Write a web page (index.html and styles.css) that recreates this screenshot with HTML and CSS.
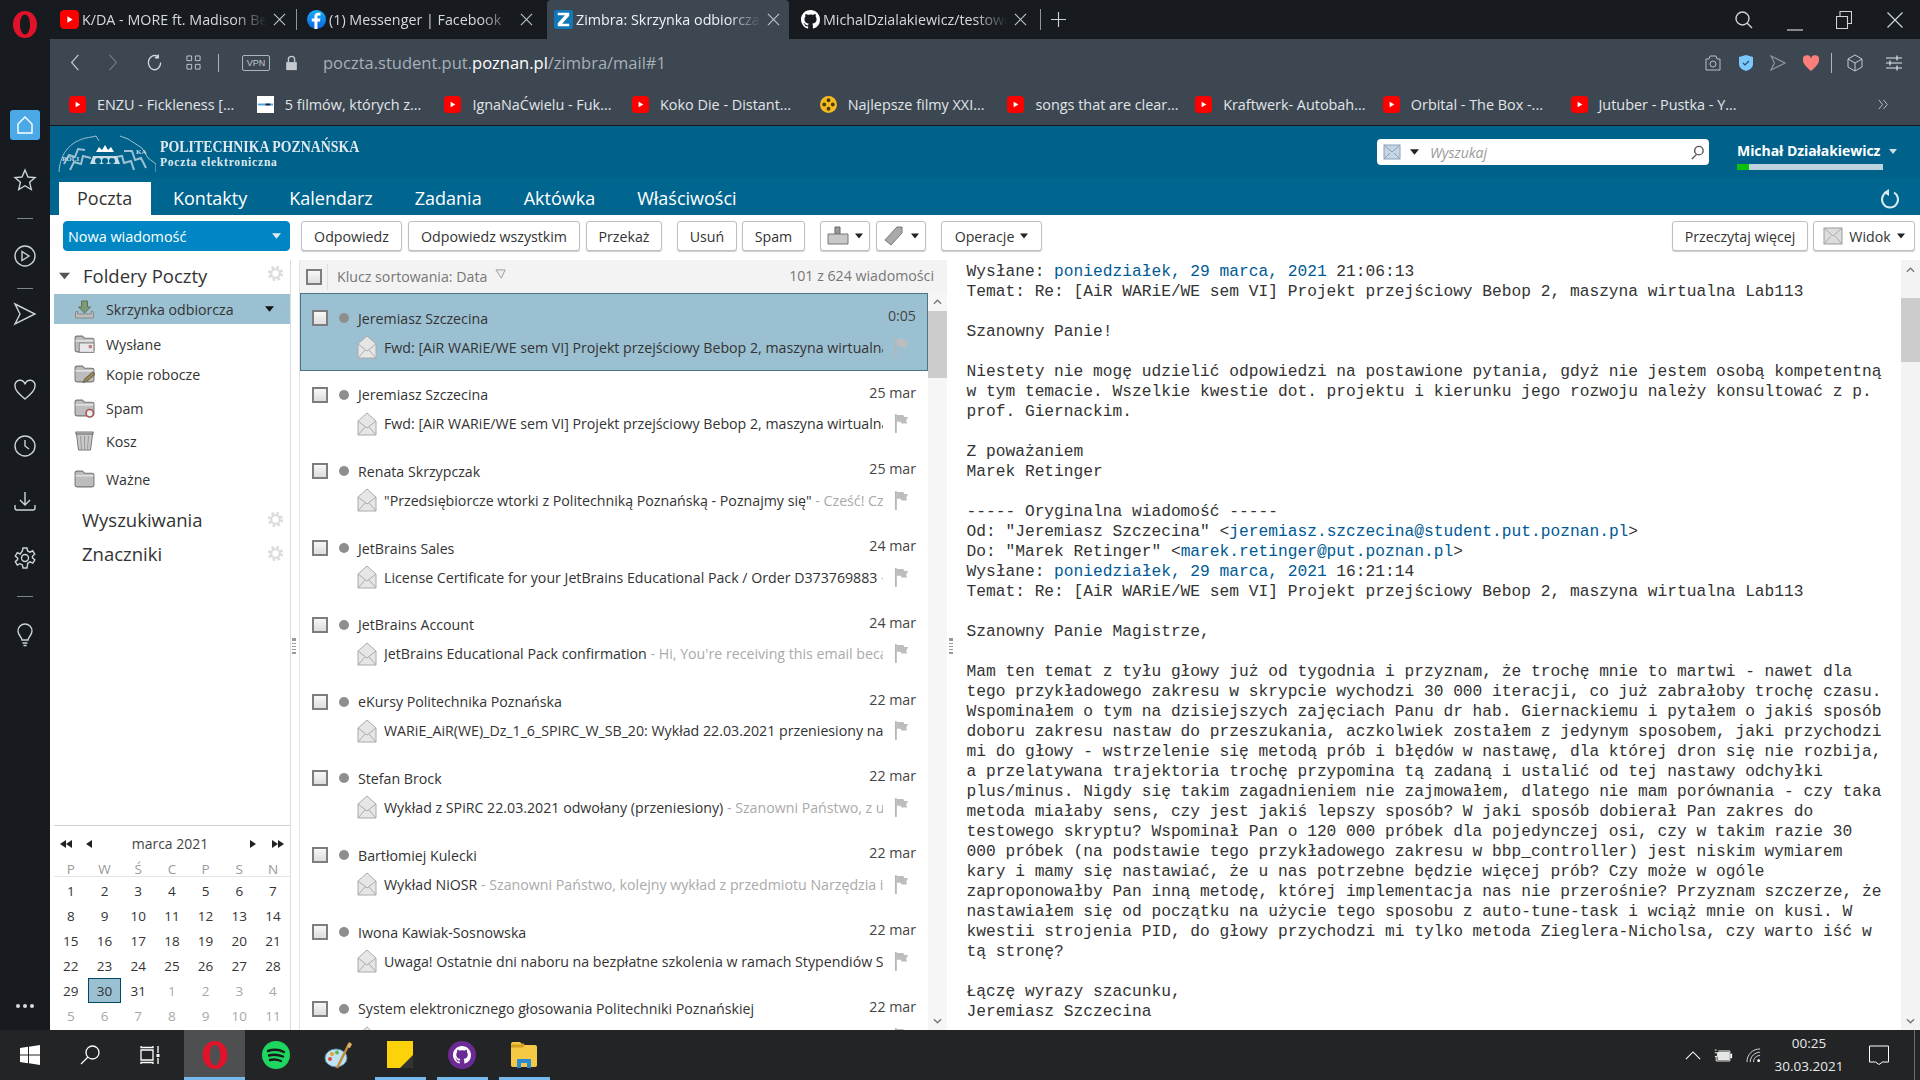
FILE: index.html
```html
<!DOCTYPE html>
<html lang="pl">
<head>
<meta charset="utf-8">
<title>Zimbra: Skrzynka odbiorcza</title>
<link rel="stylesheet" href="styles.css">
</head>
<body>
<svg class="defs" width="0" height="0">
  <symbol id="yt" viewBox="0 0 18 18"><rect x="0" y="0" width="18" height="18" rx="4" fill="#f00"/><path d="M7 6l5 3-5 3z" fill="#fff"/></symbol>
  <symbol id="opera" viewBox="0 0 24 27"><path fill="#e0132a" fill-rule="evenodd" d="M12 0C5 0 0 6 0 13.500S5 27 12 27s12-6 12-13.500S19 0 12 0zm0 3.500c-3 0-5 4.500-5 10s2 10 5 10 5-4.500 5-10-2-10-5-10z"/></symbol>
  <symbol id="gh" viewBox="0 0 16 16"><path fill="currentColor" d="M8 0C3.580 0 0 3.580 0 8c0 3.540 2.290 6.530 5.470 7.590.4.070.55-.17.55-.38 0-.19-.01-.82-.01-1.490-2.010.37-2.530-.49-2.690-.94-.09-.23-.48-.94-.82-1.130-.28-.15-.68-.52-.01-.53.63-.01 1.080.58 1.230.82.72 1.210 1.870.87 2.330.66.07-.52.28-.87.51-1.070-1.780-.2-3.640-.89-3.640-3.950 0-.87.31-1.590.82-2.150-.08-.2-.36-1.020.08-2.120 0 0 .67-.21 2.200.82.64-.18 1.320-.27 2-.27.68 0 1.360.09 2 .27 1.530-1.040 2.200-.82 2.200-.82.44 1.100.16 1.920.08 2.120.51.56.82 1.270.82 2.150 0 3.070-1.870 3.750-3.650 3.950.29.25.54.73.54 1.480 0 1.070-.01 1.930-.01 2.200 0 .21.15.46.55.38A8.013 8.013 0 0016 8c0-4.420-3.580-8-8-8z"/></symbol>
  <symbol id="x" viewBox="0 0 14 14"><path d="M1 1l12 12M13 1L1 13" stroke="currentColor" stroke-width="1.200" fill="none"/></symbol>
  <symbol id="env" viewBox="0 0 20 24"><path d="M1 9L10 1l9 8v14H1z" fill="#e6e6e6" stroke="#aaa"/><path d="M1 9l9 7 9-7M1 23l7-8M19 23l-7-8" fill="none" stroke="#aaa"/></symbol>
  <symbol id="flag" viewBox="0 0 16 20"><path d="M2 0v20" stroke="#b5b5b5" stroke-width="2"/><path d="M3 1h7l1 2h4l-2 4 1 3H8L7 8H3z" fill="#bdbdbd"/></symbol>
  <symbol id="gear" viewBox="0 0 20 20"><circle cx="10" cy="10" r="7" fill="none" stroke="#dcdcdc" stroke-width="4" stroke-dasharray="3 2.500"/><circle cx="10" cy="10" r="5" fill="none" stroke="#dcdcdc" stroke-width="2.500"/></symbol>
  <symbol id="folder" viewBox="0 0 20 18"><path d="M1 3.500C1 2 2 1.500 3 1.500h5l2 2h7c1 0 2 .5 2 1.500v10c0 1-1 1.500-2 1.500H3c-1 0-2-.5-2-1.500z" fill="#bdbdbd" stroke="#777"/><path d="M1.500 6h17" stroke="#eee"/></symbol>
  <symbol id="trash" viewBox="0 0 20 20"><path d="M1 1h18l-1 2-2 16H4L2 3z" fill="#c9c9c9" stroke="#777"/><path d="M1 3h18" stroke="#666"/><path d="M6 5l1 13M10 5v13M14 5l-1 13" stroke="#999"/></symbol>
  <symbol id="inbox" viewBox="0 0 20 20"><path d="M7 1h6v6h3l-6 6-6-6h3z" fill="#7d9a76" stroke="#5c7157"/><path d="M1 12l2-1v3h14v-3l2 1v6H1z" fill="#bdbdbd" stroke="#888"/></symbol>
  <symbol id="mailsm" viewBox="0 0 18 18"><rect x="1" y="2" width="16" height="14" fill="#c6d5e6" stroke="#8aa0b8"/><path d="M1 2l8 7 8-7M1 16l6-6M17 16l-6-6" fill="none" stroke="#8aa0b8"/></symbol>
  <symbol id="mg" viewBox="0 0 16 16"><circle cx="9.500" cy="6" r="4.500" fill="none" stroke="currentColor" stroke-width="1.500"/><path d="M7 10l-5 5" stroke="currentColor" stroke-width="1.500"/></symbol>
  <symbol id="tri" viewBox="0 0 10 6"><path d="M0 0h10L5 6z" fill="currentColor"/></symbol>
  <symbol id="chev" viewBox="0 0 10 6"><path d="M1 5l4-4 4 4" fill="none" stroke="currentColor" stroke-width="1.500"/></symbol>
  <symbol id="chevd" viewBox="0 0 10 6"><path d="M1 1l4 4 4-4" fill="none" stroke="currentColor" stroke-width="1.500"/></symbol>
</svg>

<div class="screen">
  <div class="main">
    <aside class="strip">
      <svg class="s-logo"><use href="#opera"/></svg>
      <div class="s-home"><svg viewBox="0 0 20 20"><path d="M3 9l7-7 7 7v9H3z" fill="none" stroke="#fff" stroke-width="1.400"/></svg></div>
      <svg class="s-ic s-star" viewBox="0 0 24 24"><path d="M12 2l3 7 7 .6-5.400 4.600 1.700 7.300L12 17.700 5.700 21.500l1.700-7.300L2 9.600 9 9z" fill="none" stroke="#cdd2d6" stroke-width="1.400"/></svg>
      <div class="s-line s-l1"></div>
      <svg class="s-ic s-play" viewBox="0 0 24 24"><circle cx="12" cy="12" r="10" fill="none" stroke="#cdd2d6" stroke-width="1.400"/><path d="M9 7.500l7 4.500-7 4.500z" fill="none" stroke="#cdd2d6" stroke-width="1.400"/></svg>
      <div class="s-line s-l2"></div>
      <svg class="s-ic s-send" viewBox="0 0 24 24"><path d="M2 2l20 10L2 22l5-10z" fill="none" stroke="#cdd2d6" stroke-width="1.400"/></svg>
      <svg class="s-ic s-heart" viewBox="0 0 24 24"><path d="M12 21C5 15 2 12 2 8a5 5 0 0 1 10-1.500A5 5 0 0 1 22 8c0 4-3 7-10 13z" fill="none" stroke="#cdd2d6" stroke-width="1.400"/></svg>
      <svg class="s-ic s-clock" viewBox="0 0 24 24"><circle cx="12" cy="12" r="10" fill="none" stroke="#cdd2d6" stroke-width="1.400"/><path d="M12 6v6l4 3" fill="none" stroke="#cdd2d6" stroke-width="1.400"/></svg>
      <svg class="s-ic s-down" viewBox="0 0 24 24"><path d="M12 3v13M7 11l5 5 5-5M2 16v3c0 1 1 2 2 2h16c1 0 2-1 2-2v-3" fill="none" stroke="#cdd2d6" stroke-width="1.400"/></svg>
      <svg class="s-ic s-cog" viewBox="0 0 24 24"><circle cx="12" cy="12" r="3.500" fill="none" stroke="#cdd2d6" stroke-width="1.400"/><path d="M10 2h4l.6 3 2.400 1.200 2.700-1.400 2 3.400-2.300 2 .1 1.600 2.300 2-2 3.400-2.800-1.300-2.300 1.400L14 22h-4l-.6-3-2.400-1.300-2.700 1.300-2-3.400 2.300-2v-1.600L2.300 10l2-3.400 2.800 1.400L9.400 5z" fill="none" stroke="#cdd2d6" stroke-width="1.400"/></svg>
      <div class="s-line s-l3"></div>
      <svg class="s-ic s-bulb" viewBox="0 0 24 24"><path d="M9 17c0-3-4-4.500-4-9a7 7 0 0 1 14 0c0 4.500-4 6-4 9zM9.500 20h5M10.500 22.500h3" fill="none" stroke="#cdd2d6" stroke-width="1.400"/></svg>
      <div class="s-dots"><i></i><i></i><i></i></div>
    </aside>

    <div class="browser">
      <div class="tabs">
        <div class="tab"><svg class="t-ic"><use href="#yt"/></svg><span class="t-txt">K/DA - MORE ft. Madison Beer</span><svg class="t-x"><use href="#x"/></svg></div>
        <div class="tab t-sep"><svg class="t-ic" viewBox="0 0 20 20"><defs><linearGradient id="fb" x1="0" y1="0" x2="0" y2="1"><stop offset="0" stop-color="#19aff8"/><stop offset="1" stop-color="#0d62e0"/></linearGradient></defs><circle cx="10" cy="10" r="10" fill="url(#fb)"/><path d="M11 20v-8h2.700l.4-3H11V7.200c0-.9.300-1.500 1.500-1.500h1.700V3c-.4 0-1.300-.1-2.400-.1-2.400 0-4 1.400-4 4.100V9H5v3h2.800v8z" fill="#fff"/></svg><span class="t-txt">(1) Messenger | Facebook</span><svg class="t-x"><use href="#x"/></svg></div>
        <div class="tab t-active"><svg class="t-ic" viewBox="0 0 20 20"><rect width="20" height="20" rx="2" fill="#1078b8"/><path d="M4 3h12v3l-7.500 8.500H16V17H4v-3l7.500-8.500H4z" fill="#fff"/></svg><span class="t-txt">Zimbra: Skrzynka odbiorcza: (10)</span><svg class="t-x"><use href="#x"/></svg></div>
        <div class="tab"><svg class="t-ic t-gh"><use href="#gh"/></svg><span class="t-txt">MichalDzialakiewicz/testowe</span><svg class="t-x"><use href="#x"/></svg></div>
        <div class="t-div"></div>
        <svg class="t-plus" viewBox="0 0 16 16"><path d="M8 0v16M0 8h16" stroke="#cfd3d6" stroke-width="1.200"/></svg>
        <div class="win">
          <svg class="w-search" viewBox="0 0 18 18"><circle cx="7.500" cy="7.500" r="6.500" fill="none" stroke="#cfd3d6" stroke-width="1.400"/><path d="M12 12l5 5" stroke="#cfd3d6" stroke-width="1.400"/></svg>
          <svg class="w-min" viewBox="0 0 16 16"><path d="M0 15h16" stroke="#cfd3d6" stroke-width="1.200"/></svg>
          <svg class="w-rest" viewBox="0 0 16 18"><path d="M.5 5.500h11v12H.5zM4 5.500V.5h11.500v12h-4" fill="none" stroke="#cfd3d6" stroke-width="1.100"/></svg>
          <svg class="w-close" viewBox="0 0 16 16"><path d="M.5.5l15 15M15.500.5l-15 15" stroke="#cfd3d6" stroke-width="1.200"/></svg>
        </div>
      </div>

      <div class="addr">
        <svg class="a-back" viewBox="0 0 12 20"><path d="M10 1L2 10l8 9" fill="none" stroke="#c5cad0" stroke-width="1.400"/></svg>
        <svg class="a-fwd" viewBox="0 0 12 20"><path d="M2 1l8 9-8 9" fill="none" stroke="#6f7a85" stroke-width="1.400"/></svg>
        <svg class="a-rel" viewBox="0 0 18 18"><path d="M15.500 9A6.500 7.500 0 1 1 12.500 2.800M13 .5v3.500H9.500" fill="none" stroke="#d5d9dc" stroke-width="1.400"/></svg>
        <svg class="a-grid" viewBox="0 0 16 16"><path d="M1 1h5v5H1zM10 1h5v5h-5zM1 10h5v5H1zM10 10h5v5h-5z" fill="none" stroke="#c5cad0"/></svg>
        <div class="a-sep"></div>
        <div class="a-vpn">VPN</div>
        <svg class="a-lock" viewBox="0 0 14 18"><path d="M3.500 8V5a3.500 3.500 0 0 1 7 0v3" fill="none" stroke="#c5cad0" stroke-width="1.500"/><rect x="1" y="8" width="12" height="9" fill="#c5cad0"/></svg>
        <div class="a-url">poczta.student.put.<b>poznan.pl</b>/zimbra/mail#1</div>
        <div class="a-right">
          <svg viewBox="0 0 18 18"><path d="M2 5h3l1-3h6l1 3h3v11H2z" fill="none" stroke="#b8bec4"/><circle cx="9" cy="10" r="3" fill="none" stroke="#b8bec4"/></svg>
          <svg viewBox="0 0 18 18"><path d="M9 1l7 2v7c0 4-4 6-7 7-3-1-7-3-7-7V3z" fill="#7cc7fb"/><path d="M6 9l2 2 4-4" fill="none" stroke="#26506e" stroke-width="1.200"/></svg>
          <svg viewBox="0 0 18 18"><path d="M2 2l14 7-14 7 3.500-7z" fill="none" stroke="#8d959c" stroke-width="1.200"/></svg>
          <svg viewBox="0 0 18 18"><path d="M9 17C3 12 1 9 1 6a4 4 0 0 1 8-1.500A4 4 0 0 1 17 6c0 3-2 6-8 11z" fill="#fa7f78"/></svg>
          <i class="a-rsep"></i>
          <svg viewBox="0 0 18 18"><path d="M9 1l7 4v8l-7 4-7-4V5zM2 5l7 4 7-4M9 9v8" fill="none" stroke="#c5cad0"/></svg>
          <svg class="a-sl" viewBox="0 0 18 18"><path d="M1 4h16M1 9h16M1 14h16M12 1.500v5M5 6.500v5M12 11.500v5" fill="none" stroke="#e2e5e7" stroke-width="1.200"/></svg>
        </div>
      </div>

      <div class="marks">
        <div class="mk"><svg class="m-ic"><use href="#yt"/></svg><span>ENZU - Fickleness [...</span></div>
        <div class="mk"><svg class="m-ic" viewBox="0 0 18 18"><rect width="18" height="18" fill="#fff"/><rect x="1" y="8" width="16" height="2" fill="#4aa3d8"/><rect x="9" y="8" width="5" height="2" fill="#223"/></svg><span>5 filmów, których z...</span></div>
        <div class="mk"><svg class="m-ic"><use href="#yt"/></svg><span>IgnaNaĆwielu - Fuk...</span></div>
        <div class="mk"><svg class="m-ic"><use href="#yt"/></svg><span>Koko Die - Distant...</span></div>
        <div class="mk"><svg class="m-ic" viewBox="0 0 18 18"><circle cx="9" cy="9" r="9" fill="#f5b921"/><circle cx="9" cy="4.500" r="2" fill="#4a3c10"/><circle cx="9" cy="13.500" r="2" fill="#4a3c10"/><circle cx="4.500" cy="9" r="2" fill="#4a3c10"/><circle cx="13.500" cy="9" r="2" fill="#4a3c10"/></svg><span>Najlepsze filmy XXI...</span></div>
        <div class="mk"><svg class="m-ic"><use href="#yt"/></svg><span>songs that are clear...</span></div>
        <div class="mk"><svg class="m-ic"><use href="#yt"/></svg><span>Kraftwerk- Autobah...</span></div>
        <div class="mk"><svg class="m-ic"><use href="#yt"/></svg><span>Orbital - The Box -...</span></div>
        <div class="mk"><svg class="m-ic"><use href="#yt"/></svg><span>Jutuber - Pustka - Y...</span></div>
        <svg class="m-more" viewBox="0 0 12 12"><path d="M1 1l4 5-4 5M6 1l4 5-4 5" fill="none" stroke="#c5cad0"/></svg>
      </div>

      <div class="page">
        <header class="z-head">
          <svg class="z-logo" viewBox="0 0 100 40">
            <path d="M3 38C4 18 16 5 36 3l4-1 3 5M100 38V30L92 24l-6-10-14-9-8-3" fill="none" stroke="#9dc0d2" stroke-width="1"/>
            <path d="M14 36l4-8 7 2 2-8 8 2M78 36l-3-9-7 2-2-7-6 1M8 30l5-9 6 2 3-8 7 1M90 34l-5-10-6 2-3-9-8 0" fill="none" stroke="#9dc0d2" stroke-width="2"/>
            <path d="M34 30l3-8h24l3 8z" fill="#c9dde7"/>
            <path d="M40 18l3-5 3 3 3-5 3 5 3-3 3 5z" fill="#fff"/>
            <circle cx="42" cy="27" r="3" fill="#00618a"/><circle cx="49" cy="27" r="3" fill="#00618a"/><circle cx="56" cy="27" r="3" fill="#00618a"/>
            <text x="6" y="27" class="z-logotxt">POLI</text>
            <text x="80" y="20" class="z-logotxt">KA</text>
          </svg>
          <div class="z-brand"><div class="z-b1">POLITECHNIKA POZNAŃSKA</div><div class="z-b2">Poczta elektroniczna</div></div>
          <div class="z-search">
            <svg class="zs-mail"><use href="#mailsm"/></svg>
            <svg class="zs-tri"><use href="#tri"/></svg>
            <span>Wyszukaj</span>
            <svg class="zs-mg"><use href="#mg"/></svg>
          </div>
          <div class="z-user">
            <div class="zu-name">Michał Działakiewicz<svg class="zu-tri"><use href="#tri"/></svg></div>
            <div class="zu-bar"><i></i></div>
          </div>
        </header>
        <nav class="z-nav">
          <a class="on">Poczta</a><a>Kontakty</a><a>Kalendarz</a><a>Zadania</a><a>Aktówka</a><a>Właściwości</a>
          <svg class="z-ref" viewBox="0 0 20 22"><path d="M14 4.500A8 8 0 1 1 6 4.500" fill="none" stroke="#d8e8ef" stroke-width="2"/><path d="M9 1v7L3.500 4.500z" fill="#d8e8ef"/></svg>
        </nav>
        <div class="z-tools">
          <button class="btn b-new">Nowa wiadomość<svg><use href="#tri"/></svg></button>
          <button class="btn b-a">Odpowiedz</button>
          <button class="btn b-b">Odpowiedz wszystkim</button>
          <button class="btn b-c">Przekaż</button>
          <button class="btn b-d">Usuń</button>
          <button class="btn b-e">Spam</button>
          <button class="btn b-f"><svg class="bi" viewBox="0 0 22 20"><path d="M8 1h5v7h-5z" fill="#999" stroke="#666"/><path d="M1 8h20v10H1z" fill="#c8c8c8" stroke="#777"/></svg><svg class="bt"><use href="#tri"/></svg></button>
          <button class="btn b-g"><svg class="bi" viewBox="0 0 22 20"><path d="M14 1h5v6L8 19l-6-5z" fill="#aaa" stroke="#777"/></svg><svg class="bt"><use href="#tri"/></svg></button>
          <button class="btn b-h">Operacje<svg class="bt"><use href="#tri"/></svg></button>
          <button class="btn b-i">Przeczytaj więcej</button>
          <button class="btn b-j"><svg class="bi" viewBox="0 0 20 18"><rect x="1" y="1" width="18" height="16" fill="#dcdcdc" stroke="#999"/><path d="M1 1l9 8 9-8M1 17l7-8M19 17l-7-8" fill="none" stroke="#aaa"/></svg>Widok<svg class="bt"><use href="#tri"/></svg></button>
        </div>

        <div class="z-body">
          <section class="folders">
            <div class="f-head"><svg class="f-tri"><use href="#tri"/></svg><span>Foldery Poczty</span><svg class="f-gear"><use href="#gear"/></svg></div>
            <div class="f-row on"><svg class="f-ic"><use href="#inbox"/></svg><span>Skrzynka odbiorcza</span><svg class="f-rt"><use href="#tri"/></svg></div>
            <div class="f-row r1"><svg class="f-ic" viewBox="0 0 20 18"><use href="#folder"/><rect x="5" y="8" width="14" height="9" fill="#e8e8ec" stroke="#888"/><rect x="14" y="10" width="3" height="3" fill="#c77"/></svg><span>Wysłane</span></div>
            <div class="f-row r2"><svg class="f-ic" viewBox="0 0 20 18"><use href="#folder"/><path d="M9 17l1-3 8-7 2 2-8 7z" fill="#a68a4a" stroke="#665"/></svg><span>Kopie robocze</span></div>
            <div class="f-row r3"><svg class="f-ic" viewBox="0 0 20 18"><use href="#folder"/><circle cx="15" cy="14" r="3.500" fill="#eee" stroke="#a55" stroke-width="1.500"/></svg><span>Spam</span></div>
            <div class="f-row r4"><svg class="f-ic"><use href="#trash"/></svg><span>Kosz</span></div>
            <div class="f-row r5"><svg class="f-ic"><use href="#folder"/></svg><span>Ważne</span></div>
            <div class="f-sec s1"><span>Wyszukiwania</span><svg class="f-gear"><use href="#gear"/></svg></div>
            <div class="f-sec s2"><span>Znaczniki</span><svg class="f-gear"><use href="#gear"/></svg></div>
            <div class="cal">
              <div class="c-head">
                <svg class="c-n" viewBox="0 0 12 8"><path d="M6 0v8L0 4zM12 0v8L6 4z"/></svg>
                <svg class="c-n c-n2" viewBox="0 0 6 8"><path d="M6 0v8L0 4z"/></svg>
                <span>marca 2021</span>
                <svg class="c-n c-n3" viewBox="0 0 6 8"><path d="M0 0v8l6-4z"/></svg>
                <svg class="c-n c-n4" viewBox="0 0 12 8"><path d="M0 0v8l6-4zM6 0v8l6-4z"/></svg>
              </div>
              <div class="c-grid c-wk"><span>P</span><span>W</span><span>Ś</span><span>C</span><span>P</span><span>S</span><span>N</span></div>
              <div class="c-grid">
                <span>1</span><span>2</span><span>3</span><span>4</span><span>5</span><span>6</span><span>7</span>
                <span>8</span><span>9</span><span>10</span><span>11</span><span>12</span><span>13</span><span>14</span>
                <span>15</span><span>16</span><span>17</span><span>18</span><span>19</span><span>20</span><span>21</span>
                <span>22</span><span>23</span><span>24</span><span>25</span><span>26</span><span>27</span><span>28</span>
                <span>29</span><span class="today">30</span><span>31</span><span class="o">1</span><span class="o">2</span><span class="o">3</span><span class="o">4</span>
                <span class="o">5</span><span class="o">6</span><span class="o">7</span><span class="o">8</span><span class="o">9</span><span class="o">10</span><span class="o">11</span>
              </div>
            </div>
          </section>
          <div class="split"><i></i></div>

          <section class="list">
            <div class="l-head">
              <span class="cb"></span><i class="l-div"></i>
              <span class="l-sort">Klucz sortowania: Data</span>
              <svg class="l-st" viewBox="0 0 12 12"><path d="M1 1h10L7 10z" fill="#eee" stroke="#999"/></svg>
              <span class="l-count">101 z 624 wiadomości</span>
            </div>
            <div class="l-wrap">
              <div class="rows">
                <article class="row sel"><div class="r-top"><span class="cb"></span><i class="dot"></i><span class="r-name">Jeremiasz Szczecina</span><span class="r-date">0:05</span></div><div class="r-bot"><svg class="r-env"><use href="#env"/></svg><div class="r-sub">Fwd: [AiR WARiE/WE sem VI] Projekt przejściowy Bebop 2, maszyna wirtualna Lab113</div><svg class="r-flag"><use href="#flag"/></svg></div></article>
                <article class="row"><div class="r-top"><span class="cb"></span><i class="dot"></i><span class="r-name">Jeremiasz Szczecina</span><span class="r-date">25 mar</span></div><div class="r-bot"><svg class="r-env"><use href="#env"/></svg><div class="r-sub">Fwd: [AiR WARiE/WE sem VI] Projekt przejściowy Bebop 2, maszyna wirtualna Lab113</div><svg class="r-flag"><use href="#flag"/></svg></div></article>
                <article class="row"><div class="r-top"><span class="cb"></span><i class="dot"></i><span class="r-name">Renata Skrzypczak</span><span class="r-date">25 mar</span></div><div class="r-bot"><svg class="r-env"><use href="#env"/></svg><div class="r-sub">"Przedsiębiorcze wtorki z Politechniką Poznańską - Poznajmy się" <em>- Cześć! Czy chcesz</em></div><svg class="r-flag"><use href="#flag"/></svg></div></article>
                <article class="row"><div class="r-top"><span class="cb"></span><i class="dot"></i><span class="r-name">JetBrains Sales</span><span class="r-date">24 mar</span></div><div class="r-bot"><svg class="r-env"><use href="#env"/></svg><div class="r-sub">License Certificate for your JetBrains Educational Pack / Order D373769883 <em>- Hello</em></div><svg class="r-flag"><use href="#flag"/></svg></div></article>
                <article class="row"><div class="r-top"><span class="cb"></span><i class="dot"></i><span class="r-name">JetBrains Account</span><span class="r-date">24 mar</span></div><div class="r-bot"><svg class="r-env"><use href="#env"/></svg><div class="r-sub">JetBrains Educational Pack confirmation <em>- Hi, You're receiving this email because you</em></div><svg class="r-flag"><use href="#flag"/></svg></div></article>
                <article class="row"><div class="r-top"><span class="cb"></span><i class="dot"></i><span class="r-name">eKursy Politechnika Poznańska</span><span class="r-date">22 mar</span></div><div class="r-bot"><svg class="r-env"><use href="#env"/></svg><div class="r-sub">WARiE_AiR(WE)_Dz_1_6_SPIRC_W_SB_20: Wykład 22.03.2021 przeniesiony na inny termin</div><svg class="r-flag"><use href="#flag"/></svg></div></article>
                <article class="row"><div class="r-top"><span class="cb"></span><i class="dot"></i><span class="r-name">Stefan Brock</span><span class="r-date">22 mar</span></div><div class="r-bot"><svg class="r-env"><use href="#env"/></svg><div class="r-sub">Wykład z SPiRC 22.03.2021 odwołany (przeniesiony) <em>- Szanowni Państwo, z uwagi na</em></div><svg class="r-flag"><use href="#flag"/></svg></div></article>
                <article class="row"><div class="r-top"><span class="cb"></span><i class="dot"></i><span class="r-name">Bartłomiej Kulecki</span><span class="r-date">22 mar</span></div><div class="r-bot"><svg class="r-env"><use href="#env"/></svg><div class="r-sub">Wykład NiOSR <em>- Szanowni Państwo, kolejny wykład z przedmiotu Narzędzia informatyczne</em></div><svg class="r-flag"><use href="#flag"/></svg></div></article>
                <article class="row"><div class="r-top"><span class="cb"></span><i class="dot"></i><span class="r-name">Iwona Kawiak-Sosnowska</span><span class="r-date">22 mar</span></div><div class="r-bot"><svg class="r-env"><use href="#env"/></svg><div class="r-sub">Uwaga! Ostatnie dni naboru na bezpłatne szkolenia w ramach Stypendiów Sukcesu</div><svg class="r-flag"><use href="#flag"/></svg></div></article>
                <article class="row"><div class="r-top"><span class="cb"></span><i class="dot"></i><span class="r-name">System elektronicznego głosowania Politechniki Poznańskiej</span><span class="r-date">22 mar</span></div><div class="r-bot"><svg class="r-env"><use href="#env"/></svg><div class="r-sub">Zaproszenie do głosowania</div><svg class="r-flag"><use href="#flag"/></svg></div></article>
              </div>
              <div class="sb sb-l"><svg class="sb-up"><use href="#chev"/></svg><div class="sb-th"></div><svg class="sb-dn"><use href="#chevd"/></svg></div>
            </div>
          </section>
          <div class="split split2"><i></i></div>

          <section class="msg">
<pre class="m-text">Do: "Jeremiasz Szczecina" &lt;<a>jeremiasz.szczecina@student.put.poznan.pl</a>&gt;
Wysłane: <a>poniedziałek, 29 marca, 2021</a> 21:06:13
Temat: Re: [AiR WARiE/WE sem VI] Projekt przejściowy Bebop 2, maszyna wirtualna Lab113

Szanowny Panie!

Niestety nie mogę udzielić odpowiedzi na postawione pytania, gdyż nie jestem osobą kompetentną
w tym temacie. Wszelkie kwestie dot. projektu i kierunku jego rozwoju należy konsultować z p.
prof. Giernackim.

Z poważaniem
Marek Retinger

----- Oryginalna wiadomość -----
Od: "Jeremiasz Szczecina" &lt;<a>jeremiasz.szczecina@student.put.poznan.pl</a>&gt;
Do: "Marek Retinger" &lt;<a>marek.retinger@put.poznan.pl</a>&gt;
Wysłane: <a>poniedziałek, 29 marca, 2021</a> 16:21:14
Temat: Re: [AiR WARiE/WE sem VI] Projekt przejściowy Bebop 2, maszyna wirtualna Lab113

Szanowny Panie Magistrze,

Mam ten temat z tyłu głowy już od tygodnia i przyznam, że trochę mnie to martwi - nawet dla
tego przykładowego zakresu w skrypcie wychodzi 30 000 iteracji, co już zabrałoby trochę czasu.
Wspominałem o tym na dzisiejszych zajęciach Panu dr hab. Giernackiemu i pytałem o jakiś sposób
doboru zakresu nastaw do przeszukania, aczkolwiek zostałem z jedynym sposobem, jaki przychodzi
mi do głowy - wstrzelenie się metodą prób i błędów w nastawę, dla której dron się nie rozbija,
a przelatywana trajektoria trochę przypomina tą zadaną i ustalić od tej nastawy odchyłki
plus/minus. Nigdy się takim zagadnieniem nie zajmowałem, dlatego nie mam porównania - czy taka
metoda miałaby sens, czy jest jakiś lepszy sposób? W jaki sposób dobierał Pan zakres do
testowego skryptu? Wspominał Pan o 120 000 próbek dla pojedynczej osi, czy w takim razie 30
000 próbek (na podstawie tego przykładowego zakresu w bbp_controller) jest niskim wymiarem
kary i mamy się nastawiać, że u nas potrzebne będzie więcej prób? Czy może w ogóle
zaproponowałby Pan inną metodę, której implementacja nas nie przerośnie? Przyznam szczerze, że
nastawiałem się od początku na użycie tego sposobu z auto-tune-task i wciąż mnie on kusi. W
kwestii strojenia PID, do głowy przychodzi mi tylko metoda Zieglera-Nicholsa, czy warto iść w
tą stronę?

Łączę wyrazy szacunku,
Jeremiasz Szczecina</pre>
            <div class="sb sb-m"><svg class="sb-up"><use href="#chev"/></svg><div class="sb-th"></div><svg class="sb-dn"><use href="#chevd"/></svg></div>
          </section>
        </div>
      </div>
    </div>
  </div>

  <footer class="taskbar">
    <div class="tb"><svg class="i-win" viewBox="0 0 20 20"><path d="M0 3l8-1.200V9.500H0zM9 1.700L20 0v9.500H9zM0 10.500h8v7.700L0 17zM9 10.500h11V20L9 18.300z" fill="#fff"/></svg></div>
    <div class="tb"><svg class="i-sr" viewBox="0 0 20 20"><circle cx="12.500" cy="7.500" r="6.500" fill="none" stroke="#fff" stroke-width="1.300"/><path d="M8 12l-7 7" stroke="#fff" stroke-width="1.300"/></svg></div>
    <div class="tb tb-task"><svg class="i-tv" viewBox="0 0 20 20"><path d="M1 5h12v10H1zM1 1v1.500h12V1M1 19v-1.500h12V19M18 1v7M18 13v6" fill="none" stroke="#fff" stroke-width="1.300"/><rect x="16.500" y="9" width="3" height="3" fill="#fff"/></svg></div>
    <div class="tb tb-op"><svg class="i-app"><use href="#opera"/></svg></div>
    <div class="tb"><svg class="i-app" viewBox="0 0 28 28"><circle cx="14" cy="14" r="14" fill="#1ed760"/><path d="M6 10c6-2 11-1.500 16 1M7 14.500c5-1.500 9-1 14 1M8 19c4-1 7-.7 11 1" fill="none" stroke="#1a1a1a" stroke-width="2.400" stroke-linecap="round"/></svg></div>
    <div class="tb"><svg class="i-app" viewBox="0 0 28 28"><ellipse cx="12" cy="17" rx="11" ry="9" fill="#bfe3f3" stroke="#5a8ba8"/><circle cx="6" cy="18" r="2" fill="#d84b3d"/><circle cx="8" cy="13" r="2" fill="#e8a030"/><circle cx="13" cy="11.500" r="2" fill="#5ab552"/><path d="M13 27L25 3" stroke="#c58a3a" stroke-width="2.500"/><path d="M23 6l2-5 3 2-2 4z" fill="#e0b468"/></svg></div>
    <div class="tb run"><svg class="i-app" viewBox="0 0 28 28"><path d="M1 0h26v26c0 .5-.5 1-1 1H1z" fill="#fcd20a"/><path d="M27 14v12c0 .5-.5 1-1 1H14z" fill="#333"/></svg></div>
    <div class="tb run"><svg class="i-app i-ghbg" viewBox="0 0 28 28"><circle cx="14" cy="14" r="14" fill="#6c2a94"/><svg x="5" y="5" width="18" height="18" viewBox="0 0 16 16" color="#fff"><use href="#gh"/></svg></svg></div>
    <div class="tb run"><svg class="i-app" viewBox="0 0 28 28"><path d="M1 3c0-1 .5-2 2-2h7l3 3h12c1.500 0 2 1 2 2v18c0 1-.5 2-2 2H3c-1.500 0-2-1-2-2z" fill="#f6c945"/><path d="M1 5h11l2-2" fill="none" stroke="#d69e1e" stroke-width="3"/><path d="M7 27v-9h14v9h-4v-5h-6v5z" fill="#2a8ad4"/></svg></div>
    <div class="tray">
      <svg class="i-car" viewBox="0 0 18 10"><path d="M1 9l8-8 8 8" fill="none" stroke="#fff" stroke-width="1.200"/></svg>
      <svg class="i-bat" viewBox="0 0 22 14"><path d="M2 1h2M2 4h3v4H2M3.500 8v5h15V2H6" fill="none" stroke="#fff"/><rect x="5" y="3" width="13" height="9" fill="#e6e6e6"/><rect x="19" y="5" width="2" height="5" fill="#fff"/></svg>
      <svg class="i-wifi" viewBox="0 0 16 16"><path d="M1 15C1 7 7 1 15 1M4.500 15c0-6 5-10.500 10.500-10.500M8 15c0-4 3-7 7-7" fill="none" stroke="#ddd"/><circle cx="13.500" cy="13.500" r="1.500" fill="#fff"/></svg>
      <div class="clock"><div>00:25</div><div>30.03.2021</div></div>
      <svg class="i-note" viewBox="0 0 20 20"><path d="M.5 1h19v16h-6l-3.500 2.500L6.500 17h-6z" fill="none" stroke="#fff" stroke-width="1"/></svg>
      <i class="tb-show"></i>
    </div>
  </footer>
</div>
</body>
</html>
```
FILE: styles.css
```css
* { box-sizing: border-box; }
html, body { margin: 0; padding: 0; width: 1920px; height: 1080px; overflow: hidden; }
body { font-family: "Open Sans", "Liberation Sans", sans-serif; font-size: 14.2px; color: #333; background: #171b20; }
.defs { position: absolute; }
svg { display: block; flex: none; }

.screen { display: flex; flex-direction: column; height: 1080px; }
.main { display: flex; height: 1030px; }

/* left opera strip */
.strip { width: 50px; background: #171b20; display: flex; flex-direction: column; align-items: center; }
.s-logo { width: 24px; height: 27px; margin-top: 11px; }
.s-home { width: 30px; height: 30px; margin-top: 72px; border-radius: 3px; background: #4ba9e8; padding: 5px; }
.s-ic { width: 24px; height: 24px; }
.s-star { margin-top: 28px; }
.s-line { width: 16px; height: 1px; background: #7e858b; }
.s-l1 { margin-top: 26px; }
.s-play { margin-top: 25px; }
.s-l2 { margin-top: 20px; }
.s-send { margin-top: 13px; }
.s-heart { margin-top: 52px; }
.s-clock { margin-top: 32px; }
.s-down { margin-top: 31px; }
.s-cog { margin-top: 33px; }
.s-l3 { margin-top: 26px; }
.s-bulb { margin-top: 26px; }
.s-dots { margin-top: auto; margin-bottom: 22px; display: flex; gap: 3px; }
.s-dots i { width: 4px; height: 4px; border-radius: 50%; background: #d8dbde; }

.browser { width: 1870px; display: flex; flex-direction: column; }

/* tabs */
.tabs { height: 39px; display: flex; align-items: flex-start; gap: 5px; padding-left: 3px; position: relative; background: #171b20; }
.tab { width: 242px; height: 39px; display: flex; align-items: center; padding: 0 9px 0 7px; color: #d6d9db; font-size: 14.300px; position: relative; border-radius: 4px 4px 0 0; }
.t-sep::before { content: ""; position: absolute; left: -4px; top: 9px; height: 21px; width: 1px; background: #8f979d; }
.t-active { background: #3c4752; color: #f0f1f2; }
.t-ic { width: 19px; height: 19px; }
.t-gh { color: #fff; }
.t-txt { flex: 1; margin-left: 3px; white-space: nowrap; overflow: hidden; -webkit-mask-image: linear-gradient(90deg, #000 82%, transparent 100%); mask-image: linear-gradient(90deg, #000 82%, transparent 100%); }
.t-x { width: 13px; height: 13px; margin-left: 6px; color: #bfc4c8; }
.t-div { width: 1px; height: 21px; margin: 9px 0 0 -1px; background: #8f979d; }
.t-plus { width: 15px; height: 15px; margin: 12px 0 0 5px; }
.win { position: absolute; inset: 0 0 0 auto; display: flex; align-items: center; }
.w-search { width: 18px; height: 18px; margin-right: 34px; }
.w-min { width: 16px; height: 16px; margin-right: 33px; margin-top: 6px; }
.w-rest { width: 16px; height: 18px; margin-right: 35px; }
.w-close { width: 16px; height: 16px; margin-right: 17px; }

/* address bar */
.addr { height: 49px; background: #3c4752; display: flex; align-items: center; position: relative; padding-bottom: 2px; }
.a-back { width: 12px; height: 17px; margin-left: 19px; }
.a-fwd { width: 12px; height: 17px; margin-left: 26px; }
.a-rel { width: 17px; height: 17px; margin-left: 27px; }
.a-grid { width: 15px; height: 15px; margin-left: 23px; }
.a-sep { width: 1px; height: 18px; margin-left: 17px; background: #aeb4ba; }
.a-vpn { width: 28px; height: 16px; margin-left: 23px; border: 1px solid #aeb4ba; border-radius: 2px; font-size: 9px; line-height: 14px; text-align: center; color: #c5cad0; font-family: "Liberation Sans", sans-serif; }
.a-lock { width: 13px; height: 16px; margin-left: 15px; }
.a-url { margin-left: 25px; font-size: 16.500px; color: #a8b0b8; white-space: nowrap; }
.a-url b { font-weight: 400; color: #fff; }
.a-right { margin-left: auto; display: flex; align-items: center; gap: 14.500px; padding-right: 17px; }
.a-right svg { width: 18px; height: 18px; }
.a-right .a-sl { margin-left: 7px; }
.a-rsep { width: 1px; height: 20px; background: #aeb4ba; margin: 0 -1px 0 -3px; }

/* bookmarks */
.marks { height: 37px; background: #3c4752; display: flex; align-items: center; padding: 0 0 4px 19px; position: relative; }
.mk { width: 187.700px; display: flex; align-items: center; gap: 11px; color: #e2e5e8; font-size: 14.400px; white-space: nowrap; overflow: hidden; }
.m-ic { width: 17px; height: 17px; }
.m-more { width: 11px; height: 11px; position: absolute; right: 31px; top: 11px; }

/* zimbra page */
.page { flex: 1; background: #fff; display: flex; flex-direction: column; border-top: 1px solid #14181c; min-height: 0; }
.z-head { height: 52px; background: #00618a; display: flex; position: relative; color: #fff; }
.z-logo { width: 100px; height: 40px; margin: 8px 0 0 6px; }
.z-logotxt { font: 700 7px "Liberation Serif", serif; fill: #c4dbe6; }
.z-brand { margin: 11px 0 0 4px; font-family: "Liberation Serif", serif; font-weight: 700; color: #dfeaf0; white-space: nowrap; }
.z-b1 { font-size: 17px; line-height: 19px; transform: scaleX(.816); transform-origin: 0 0; }
.z-b2 { font-size: 11.500px; line-height: 12px; letter-spacing: .8px; }
.z-search { width: 332px; height: 26px; position: absolute; left: 1327px; top: 13px; background: #fff; border-radius: 4px; display: flex; align-items: center; color: #9a9a9a; font-size: 14px; font-style: italic; padding-left: 6px; }
.zs-mail { width: 18px; height: 18px; }
.zs-tri { width: 9px; height: 6px; margin: 0 11px 0 9px; color: #222; }
.zs-mg { width: 15px; height: 15px; margin-left: auto; margin-right: 4px; color: #555; }
.z-user { position: absolute; left: 1687px; top: 0; width: 170px; }
.zu-name { margin-top: 15px; font-size: 14px; line-height: 20px; font-weight: 700; letter-spacing: -.05px; white-space: nowrap; display: flex; align-items: center; color: #fff; }
.zu-tri { width: 8px; height: 5px; margin-left: 9px; color: #cfe0e8; }
.zu-bar { width: 146px; height: 6px; margin-top: 3px; background: #bcd3de; }
.zu-bar i { display: block; width: 12px; height: 6px; background: #0cc00c; }

.z-nav { height: 37px; background: #006690; display: flex; align-items: flex-end; padding-left: 9px; position: relative; }
.z-nav a { height: 33px; font-size: 18px; line-height: 32px; color: #fff; padding: 0 20px; margin-right: 2px; white-space: nowrap; }
.z-nav a.on { background: #fff; color: #333; width: 92px; padding: 0 0 0 18px; margin-right: 2px; }
.z-ref { position: absolute; right: 20px; top: 10px; width: 20px; height: 22px; }

.z-tools { height: 45px; display: flex; align-items: flex-start; padding: 6px 5px 0 13px; gap: 6px; background: #fff; }
.btn { height: 30px; padding: 0; font: inherit; font-size: 14.200px; color: #333; background: #fff; border: 1px solid #bfbfbf; border-radius: 3px; box-shadow: 0 1px 1px #ccc; display: flex; align-items: center; justify-content: center; white-space: nowrap; }
.b-new { width: 227px; background: #0087c3; color: #fff; border-color: #0087c3; box-shadow: none; justify-content: flex-start; padding-left: 4px; margin-right: 5px; border-radius: 4px; position: relative; font-size: 14.400px; }
.b-new svg { position: absolute; right: 8px; top: 11px; width: 9px; height: 6px; color: #dcecf4; }
.b-a { width: 101px; }
.b-b { width: 172px; }
.b-c { width: 76px; }
.b-d { width: 60px; margin-left: 9px; }
.b-e { width: 63px; margin-left: -1px; }
.b-f { width: 50px; margin-left: 9px; }
.b-g { width: 50px; }
.b-h { width: 101px; margin-left: 9px; }
.b-i { width: 136px; margin-left: auto; }
.b-j { width: 102px; margin-left: -1px; }
.bi { width: 22px; height: 20px; }
.bt { width: 8px; height: 6px; margin-left: 6px; color: #222; }
.b-j .bi { width: 20px; height: 18px; margin-right: 6px; }

.z-body { flex: 1; display: flex; min-height: 0; }

/* folders */
.folders { width: 241px; border-right: 1px solid #dcdcdc; padding-left: 4px; display: flex; flex-direction: column; }
.f-head { height: 34px; display: flex; align-items: center; font-size: 18.500px; position: relative; padding: 0 0 4px 29px; color: #333; }
.f-tri { position: absolute; left: 5px; top: 11px; width: 11px; height: 10px; color: #555; }
.f-gear { position: absolute; right: 6px; top: 5px; width: 17px; height: 17px; }
.f-head .f-gear { top: 5px; }
.f-row { display: flex; align-items: center; height: 30px; position: relative; padding-left: 20px; }
.f-row span { margin-left: 11px; }
.f-ic { width: 21px; height: 20px; }
.f-row.on { background: #9bc0d2; width: 236px; padding-top: 1px; }
.f-rt { position: absolute; right: 16px; top: 12px; width: 9px; height: 6px; color: #111; }
.r1 { margin-top: 5px; }
.r2 { margin-top: 0; }
.r3 { margin-top: 4px; }
.r4 { margin-top: 3px; }
.r5 { margin-top: 8px; }
.f-sec { height: 34px; display: flex; align-items: center; font-size: 18.500px; padding-left: 28px; position: relative; color: #333; }
.s1 { margin-top: 8px; }
.f-sec.s2 { height: 34px; }
.f-sec .f-gear { top: 9px; }

/* mini calendar */
.cal { margin-top: auto; width: 236px; border-top: 1px solid #cfcfcf; font-size: 13.500px; padding-bottom: 2px; }
.c-head { height: 34px; display: flex; align-items: center; position: relative; justify-content: center; color: #444; font-size: 14px; padding-right: 4px; }
.c-n { position: absolute; left: 6px; top: 14px; width: 12px; height: 8px; fill: #222; }
.c-n2 { left: 32px; width: 6px; }
.c-n3 { left: 196px; width: 6px; }
.c-n4 { left: 218px; }
.c-grid { display: grid; grid-template-columns: repeat(7, 33.700px); grid-auto-rows: 25px; }
.c-grid span { display: flex; align-items: center; justify-content: center; color: #333; }
.c-wk { height: 17px; grid-auto-rows: 17px; border-bottom: 1px solid #e6e6e6; margin-bottom: 1px; }
.c-wk span { color: #9a9a9a; }
.c-grid .o { color: #a8a8a8; }
.c-grid .today { background: #9bc0d2; border: 1px solid #00476a; }

.split { width: 8px; position: relative; flex: none; }
.split i { position: absolute; left: 1px; top: 378px; width: 4px; height: 16px; border-top: 2px dotted #999; border-bottom: 2px dotted #999; background: repeating-linear-gradient(#999 0 1px, transparent 1px 3px); }
.split2 { width: 9px; }
.split2 i { left: 2px; }

/* message list */
.list { width: 648px; display: flex; flex-direction: column; flex: none; border-left: 1px solid #e2e2e2; }
.l-head { height: 33px; background: #f3f3f3; display: flex; align-items: center; padding-left: 6px; color: #777; position: relative; flex: none; }
.cb { width: 16px; height: 16px; border: 2px solid #7d7d7d; background: linear-gradient(#f7f7f7, #dedede); flex: none; }
.l-div { width: 1px; height: 26px; background: #e0e0e0; margin-left: 5px; }
.l-sort { margin-left: 9px; }
.l-st { width: 11px; height: 11px; margin: -4px 0 0 8px; }
.l-count { position: absolute; right: 13px; top: 6px; }
.l-wrap { flex: 1; display: flex; overflow: hidden; min-height: 0; }
.rows { width: 628px; flex: none; }
.row { height: 76.800px; padding: 13px 0 0 12px; }
.row.sel { height: 78px; margin-bottom: -1.500px; background: #9bc0d2; box-shadow: inset 0 0 0 1px #4d7388; position: relative; }
.r-top { display: flex; align-items: center; height: 24px; }
.dot { width: 10px; height: 10px; border-radius: 50%; background: #8e8e8e; margin-left: 11px; }
.r-name { margin-left: 9px; white-space: nowrap; color: #333; }
.r-date { margin-left: auto; margin-right: 12px; margin-top: -5px; color: #444; }
.r-bot { display: flex; align-items: center; height: 26px; margin-top: 4px; padding-left: 45px; }
.r-env { width: 20px; height: 24px; }
.r-sub { width: 499px; margin-left: 7px; white-space: nowrap; overflow: hidden; color: #333; }
.r-sub em { font-style: normal; color: #aaa; }
.r-flag { width: 15px; height: 19px; margin-left: 11px; }

.sb { width: 19px; flex: none; background: #f6f6f6; display: flex; flex-direction: column; align-items: center; color: #777; }
.sb-up { width: 9px; height: 6px; margin-top: 6px; }
.sb-th { width: 100%; height: 67px; background: #ccc; margin-top: 6px; }
.sb-dn { width: 9px; height: 6px; margin-top: auto; margin-bottom: 6px; }

/* message */
.msg { flex: 1; display: flex; overflow: hidden; min-width: 0; }
.m-text { flex: 1; margin: -18px 0 0; padding: 0 0 0 10.500px; font: 16.230px/20px "Liberation Mono", "DejaVu Sans Mono", monospace; color: #333; white-space: pre; overflow: hidden; }
.m-text a { color: #005a95; }
.sb-m { background: #f3f3f3; }
.sb-m .sb-up { margin-top: 7px; }
.sb-m .sb-th { height: 64px; margin-top: 25px; }

/* taskbar */
.taskbar { height: 50px; background: #222426; display: flex; position: relative; color: #fff; }
.tb { width: 60px; height: 50px; display: flex; align-items: center; justify-content: center; position: relative; flex: none; }
.tb-task { margin-right: 4px; }
.tb-op { width: 61px; background: #4d4f50; box-shadow: inset 0 -3px 0 #76b9ed; margin-right: 0; }
.tb-op ~ .tb { width: 62px; }
.i-win { width: 20px; height: 20px; }
.i-sr { width: 20px; height: 20px; }
.i-tv { width: 20px; height: 20px; }
.i-app { width: 28px; height: 28px; }
.run::after { content: ""; position: absolute; left: 6px; right: 5px; bottom: 0; height: 3px; background: #76b9ed; }
.tray { margin-left: auto; display: flex; align-items: center; position: relative; width: 240px; }
.i-car { width: 16px; height: 9px; margin-left: 5px; }
.i-bat { width: 20px; height: 13px; margin-left: 12px; }
.i-wifi { width: 15px; height: 15px; margin-left: 13px; }
.clock { margin-left: 13px; width: 70px; text-align: center; font-size: 13.500px; line-height: 23px; color: #e8e8e8; white-space: nowrap; }
.i-note { width: 20px; height: 20px; margin-left: 25px; }
.tb-show { position: absolute; right: 5px; top: 0; width: 1px; height: 50px; background: #6a6c6e; }
```
